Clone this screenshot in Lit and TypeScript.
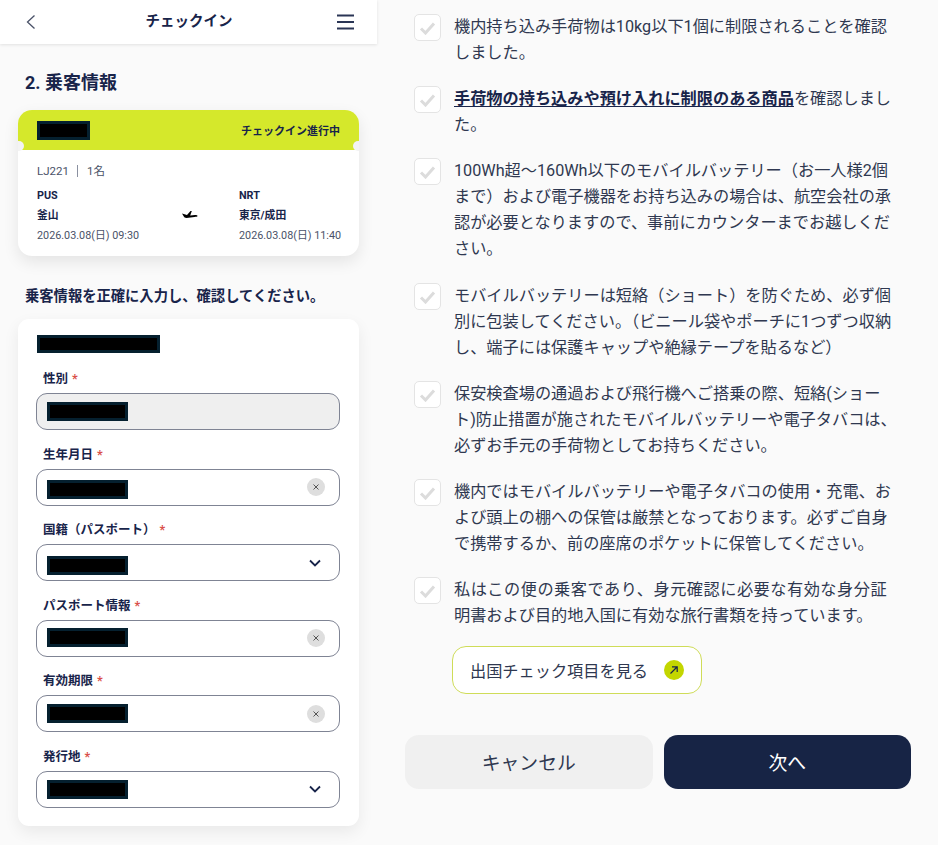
import { LitElement, html, css, nothing } from "lit";
import { customElement } from "lit/decorators.js";

const items: unknown[] = [
  html`機内持ち込み手荷物は10kg以下1個に制限されることを確認<br />しました。`,
  html`<a class="lnk">手荷物の持ち込みや預け入れに制限のある商品</a>を確認しまし<br />た。`,
  html`100Wh超～160Wh以下のモバイルバッテリー（お一人様2個<br />まで）および電子機器をお持ち込みの場合は、航空会社の承<br />認が必要となりますので、事前にカウンターまでお越しくだ<br />さい。`,
  html`モバイルバッテリーは短絡（ショート）を防ぐため、必ず個<br />別に包装してください。（ビニール袋やポーチに1つずつ収納<br />し、端子には保護キャップや絶縁テープを貼るなど）`,
  html`保安検査場の通過および飛行機へご搭乗の際、短絡(ショー<br />ト)防止措置が施されたモバイルバッテリーや電子タバコは、<br />必ずお手元の手荷物としてお持ちください。`,
  html`機内ではモバイルバッテリーや電子タバコの使用・充電、お<br />よび頭上の棚への保管は厳禁となっております。必ずご自身<br />で携帯するか、前の座席のポケットに保管してください。`,
  html`<span class="sp">私はこの便の乗客であり、身元確認に必要な有効な身分証</span><br />明書および目的地入国に有効な旅行書類を持っています。`,
];

const fields = [
  { label: "性別", kind: "disabled", dy: 0 },
  { label: "生年月日", kind: "clear", dy: 2 },
  { label: "国籍（パスポート）", kind: "select", dy: 3 },
  { label: "パスポート情報", kind: "clear", dy: -1 },
  { label: "有効期限", kind: "clear", dy: 0 },
  { label: "発行地", kind: "select", dy: 0 },
];

@customElement("app-root")
export class AppRoot extends LitElement {
  static styles = css`
    :host {
      display: block;
      width: 938px;
      height: 845px;
      overflow: hidden;
      background: #fafafa;
      color: #18244a;
      font-family: "Roboto", "Noto Sans CJK JP", sans-serif;
    }
    * { box-sizing: border-box; }
    .page { display: flex; height: 845px; }
    .left { width: 377px; flex: none; background: #fafafa; }
    .right { flex: 1; padding: 14px 0 0 37px; }
    .hdr {
      height: 44px;
      background: #fff;
      box-shadow: 0 1px 3px rgba(0,0,0,.1);
      display: flex;
      align-items: center;
      justify-content: space-between;
      padding: 0 23px 0 25px;
      position: relative;
    }
    .hdr h1 { margin: 0 0 0 5px; font-size: 14.5px; font-weight: 700; line-height: 44px; }
    .hdr svg { display: block; }
    h2 { margin: 28px 0 0 25px; font-size: 18px; line-height: 22px; font-weight: 700; }
    .ticket {
      margin: 16px 18px 0;
      width: 341px;
      height: 146px;
      background: #fff;
      border-radius: 14px;
      box-shadow: 0 6px 16px rgba(0,0,0,.09);
      position: relative;
    }
    .band {
      height: 40px;
      background: #d5e82b;
      border-radius: 14px 14px 0 0;
      display: flex;
      align-items: center;
      justify-content: space-between;
      padding: 0 19px;
      font-size: 11px;
      font-weight: 700;
    }
    .notch {
      position: absolute;
      top: 31px;
      width: 6px;
      height: 10px;
      background: #f3f3f3;
    }
    .notch.l { left: 0; border-radius: 0 5px 5px 0; }
    .notch.r { right: 0; border-radius: 5px 0 0 5px; }
    .black {
      display: block;
      background: #000;
      border: 3px solid #05202f;
    }
    .b-name { width: 53px; height: 19px; }
    .tbody { padding: 14px 19px 0; }
    .meta { display: flex; align-items: center; color: #4a5268; line-height: 14px; font-size: 11.5px; }
    .sep { width: 1px; height: 12px; background: #8a90a0; margin: 0 9px 0 8px; }
    .route {
      display: grid;
      grid-template-columns: 202px 1fr;
      margin-top: 8px;
      position: relative;
    }
    .col { display: flex; flex-direction: column; white-space: nowrap; }
    .col b { line-height: 20px; font-weight: 700; font-size: 10.8px; }
    .col span { line-height: 20px; color: #4a5268; font-size: 10.8px; }
    .plane { position: absolute; left: 145px; top: 24px; }
    .prompt { margin: 30px 0 0 25px; font-size: 14.3px; font-weight: 700; line-height: 20px; }
    .form {
      margin: 13px 18px 0;
      width: 341px;
      height: 507px;
      background: #fff;
      border-radius: 11px;
      box-shadow: 0 6px 16px rgba(0,0,0,.07);
      padding: 16px 19px 0 18px;
    }
    .b-full { width: 123px; height: 18px; margin-left: 1px; }
    .lbl {
      font-size: 12.5px;
      font-weight: 700;
      line-height: 20px;
      margin: 14.6px 0 4px 7px;
      height: 20px;
      display: flex;
      gap: 4px;
    }
    .fld.first .lbl { margin-top: 16px; }
    .req { color: #d9504a; font-size: 12.5px; }
    .inp {
      height: 37px;
      border: 1px solid #7f8494;
      border-radius: 11px;
      background: #fff;
      display: flex;
      align-items: center;
      justify-content: space-between;
      padding: 0 14px 0 10px;
    }
    .inp.disabled { background: #efefef; }
    .inp.select { padding-right: 18px; }
    .b-val { width: 81px; height: 19px; }
    .clr {
      width: 18px;
      height: 18px;
      border-radius: 50%;
      background: #dedede;
      display: flex;
      align-items: center;
      justify-content: center;
    }
    .items { height: 630px; }
    .item { display: flex; gap: 13px; margin-bottom: 20px; }
    .item.third { margin-bottom: 21px; }
    .box {
      width: 27px;
      height: 27px;
      flex: none;
      background: #fff;
      border: 1px solid #e4e4e4;
      border-radius: 5px;
      display: flex;
      align-items: center;
      justify-content: center;
    }
    .txt { font-size: 16.2px; line-height: 26px; color: #2f3850; white-space: nowrap; }
    .sp { letter-spacing: 0.5px; }
    .lnk { color: #18244a; font-weight: 700; text-decoration: underline; text-underline-offset: 2px; }
    .more {
      margin: 2px 0 0 38px;
      width: 250px;
      height: 48px;
      border: 1px solid #cfdc58;
      border-radius: 14px;
      background: #fff;
      display: flex;
      align-items: center;
      justify-content: space-between;
      padding: 0 17px 1px 17px;
      font-size: 16.2px;
      color: #2f3850;
    }
    .go {
      width: 20px;
      height: 20px;
      border-radius: 50%;
      background: #c3d600;
      display: flex;
      align-items: center;
      justify-content: center;
    }
    .btns { display: flex; gap: 11px; margin: 41px 0 0 -9px; }
    .btn {
      width: 247.5px;
      height: 54px;
      border-radius: 14px;
      display: flex;
      align-items: center;
      justify-content: center;
      padding-bottom: 2px;
      font-size: 18.8px;
    }
    .btn.c { background: #f0f0f0; color: #2f3850; }
    .btn.n { background: #172445; color: #fff; }
  `;

  render() {
    return html`<div class="page">
      <section class="left">
        <header class="hdr">
          <svg width="11" height="16" viewBox="0 0 11 16"><path d="M9.500 1.500 2.500 8l7 6.500" fill="none" stroke="#4a5268" stroke-width="1.300"/></svg>
          <h1>チェックイン</h1>
          <svg width="17" height="16" viewBox="0 0 17 16"><path d="M0 1.500h17M0 8h17M0 14.500h17" fill="none" stroke="#2a3555" stroke-width="2"/></svg>
        </header>
        <h2>2. 乗客情報</h2>
        <div class="ticket">
          <div class="band"><i class="black b-name"></i><span>チェックイン進行中</span></div>
          <i class="notch l"></i><i class="notch r"></i>
          <div class="tbody">
            <div class="meta">LJ221<i class="sep"></i>1名</div>
            <div class="route">
              <div class="col"><b>PUS</b><b>釜山</b><span>2026.03.08(日) 09:30</span></div>
              <svg class="plane" width="16" height="10" viewBox="0 0 16 10"><path d="M0 3.500 5 5 8.500 1h1.300L8.200 5.400 13 5c1.500 0 2.500.4 2.500 1 0 .6-1.500.8-3 1L4.500 8C3 8 2 7 1.500 6L0 3.500z" fill="#000"/></svg>
              <div class="col"><b>NRT</b><b>東京/成田</b><span>2026.03.08(日) 11:40</span></div>
            </div>
          </div>
        </div>
        <div class="prompt">乗客情報を正確に入力し、確認してください。</div>
        <div class="form">
          <i class="black b-full"></i>
          ${fields.map(
            (f, i) => html`<div class="fld ${i === 0 ? "first" : ""}">
              <div class="lbl">${f.label}<span class="req">*</span></div>
              <div class="inp ${f.kind}">
                <i class="black b-val" style="transform: translateY(${f.dy}px)"></i>
                ${f.kind === "clear"
                  ? html`<span class="clr"><svg width="8" height="8" viewBox="0 0 8 8"><path d="M1.500 1.500l5 5M6.500 1.500l-5 5" stroke="#555" stroke-width="1"/></svg></span>`
                  : f.kind === "select"
                    ? html`<svg width="12" height="8" viewBox="0 0 12 8"><path d="M1 1.500 6 6.500l5-5" fill="none" stroke="#18244a" stroke-width="1.800"/></svg>`
                    : nothing}
              </div>
            </div>`
          )}
        </div>
      </section>
      <section class="right">
        <div class="items">
          ${items.map(
            (t, i) => html`<div class="item ${i === 2 ? "third" : ""}">
              <span class="box"><svg width="17" height="14" viewBox="0 0 17 14"><path d="M2 7.500 6.500 12 15 2.500" fill="none" stroke="#dcdcdc" stroke-width="3"/></svg></span>
              <div class="txt">${t}</div>
            </div>`
          )}
        </div>
        <div class="more">出国チェック項目を見る<span class="go"><svg width="10" height="10" viewBox="0 0 10 10"><path d="M1.500 8.500 8 2M3 1.800h5.200V7" fill="none" stroke="#18244a" stroke-width="1.200"/></svg></span></div>
        <div class="btns"><div class="btn c">キャンセル</div><div class="btn n">次へ</div></div>
      </section>
    </div>`;
  }
}
